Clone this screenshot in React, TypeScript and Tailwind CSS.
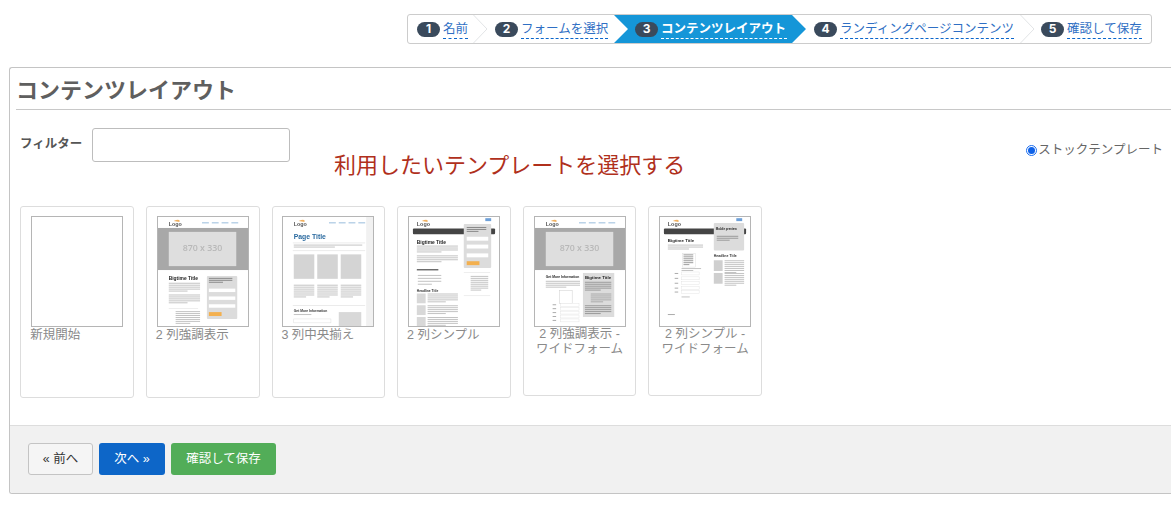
import React from "react";

const FONT = "font-['Liberation_Sans','Noto_Sans_CJK_JP',sans-serif]";

function Chevron() {
  return (
    <svg width="15" height="28" viewBox="0 0 15 28" className="shrink-0">
      <path d="M0.5 0 L14 14 L0.5 28" fill="none" stroke="#e2e4e6" strokeWidth="1" />
    </svg>
  );
}

function Stepper() {
  return (
    <div className="ml-[407px] flex h-[30px] w-[745px] items-center rounded-[3px] border border-[#cccccc] bg-white">
      <Step n={1} label="名前" className="pl-[9px] pr-[5px]" textWidth="w-[25px]" />
      <Chevron />
      <Step n={2} label="フォームを選択" className="pl-[7px] pr-[6px]" textWidth="w-[87px]" />
      <div className="flex h-[28px] w-[192px] shrink-0 items-center pl-[21px] bg-[#1596d8] [clip-path:polygon(0_0,178px_0,192px_50%,178px_100%,0_100%,14px_50%)]">
        <Badge n={3} />
        <span className="ml-[3px] mt-[1px] w-[126px] whitespace-nowrap border-b border-dashed border-white text-[12.5px] leading-[17px] font-bold text-white">
          コンテンツレイアウト
        </span>
      </div>
      <Step n={4} label="ランディングページコンテンツ" className="pl-[8px] pr-[6px]" textWidth="w-[174px]" />
      <Chevron />
      <Step n={5} label="確認して保存" className="pl-[6px]" textWidth="w-[75px]" />
    </div>
  );
}

function Badge({ n }: { n: number }) {
  return (
    <span className="flex h-[15px] w-[23px] shrink-0 items-center justify-center rounded-full bg-[#3a4a5c] text-[12px] font-bold text-white font-['Inter',sans-serif]">
      {n}
    </span>
  );
}

function Step({ n, label, className, textWidth }: { n: number; label: string; className: string; textWidth: string }) {
  return (
    <div className={`flex shrink-0 items-center ${className}`}>
      <Badge n={n} />
      <span className={`ml-[3px] mt-[1px] ${textWidth} whitespace-nowrap border-b border-dashed border-[#0b66cc] text-[12.5px] leading-[17px] text-[#2f6fc4]`}>
        {label}
      </span>
    </div>
  );
}

function Lines({ x, y, w, n, gap = 2, color = "#c2c2c2" }: { x: number; y: number; w: number; n: number; gap?: number; color?: string }) {
  return (
    <>
      {Array.from({ length: n }, (_, i) => (
        <rect key={i} x={x} y={y + i * gap} width={i === n - 1 ? w * 0.6 : w} height={1} fill={color} />
      ))}
    </>
  );
}

function Logo({ x = 11, y = 3 }: { x?: number; y?: number }) {
  return (
    <g>
      <path d={`M${x + 5} ${y + 1} Q${x + 9} ${y - 1} ${x + 11} ${y} L${x + 11} ${y + 2} Z`} fill="#f0b060" />
      <text x={x} y={y + 6} fontSize="5.5" fontWeight="700" fill="#555" fontFamily="Liberation Sans">
        Logo
      </text>
    </g>
  );
}

function NavLinks({ x = 45, y = 5 }: { x?: number; y?: number }) {
  return (
    <g>
      {[0, 10, 20, 30].map((d) => (
        <rect key={d} x={x + d} y={y} width={7} height={1.4} fill="#b4cfe6" />
      ))}
    </g>
  );
}

function Thumb({ children }: { children?: React.ReactNode }) {
  return (
    <div className="h-[111px] w-[92px] shrink-0 overflow-hidden border border-[#b5b5b5] bg-white">
      <svg width="90" height="109" viewBox="0 0 92 111" className="block blur-[0.6px]">
        {children}
      </svg>
    </div>
  );
}

function Hero() {
  return (
    <g>
      <rect x="-2" y="11" width="96" height="43" fill="#a8a8a8" />
      <rect x="11" y="15" width="69" height="35" fill="#dedede" />
      <text x="45.5" y="35" textAnchor="middle" fontSize="9" fontWeight="600" fill="#b8b8b8" fontFamily="Open Sans">
        870 x 330
      </text>
    </g>
  );
}

function TwoColHighlight() {
  return (
    <Thumb>
      <Logo />
      <NavLinks />
      <Hero />
      <text x="11" y="64" fontSize="5" fontWeight="700" fill="#222" fontFamily="Liberation Sans">Bigtime Title</text>
      <Lines x={11} y={67} w={32} n={5} />
      <Lines x={11} y={79} w={32} n={5} />
      <rect x="11" y="93" width="30" height="0.6" fill="#e2e2e2" />
      <Lines x={18} y={96} w={25} n={7} />
      <rect x="50" y="60" width="31" height="44" rx="1" fill="#dcdcdc" />
      <Lines x={52} y={62} w={24} n={3} color="#888" />
      <rect x="52" y="73" width="27" height="3.5" fill="#fff" />
      <rect x="52" y="81" width="27" height="3.5" fill="#fff" />
      <rect x="52" y="89" width="27" height="3.5" fill="#fff" />
      <rect x="52" y="97" width="13" height="4" fill="#f3b04f" />
    </Thumb>
  );
}

function ThreeColCenter() {
  return (
    <Thumb>
      <rect x="85" y="-2" width="9" height="115" fill="#f1f1f1" />
      <Logo />
      <NavLinks x={47} />
      <text x="11" y="22" fontSize="7" fontWeight="700" fill="#2b6a9f" fontFamily="Liberation Sans">Page Title</text>
      <rect x="10" y="26" width="74" height="0.6" fill="#ddd" />
      <Lines x={11} y={28} w={70} n={2} />
      <rect x="10" y="34" width="74" height="0.6" fill="#ddd" />
      {[11, 35, 59].map((x) => (
        <g key={x}>
          <rect x={x} y="38" width="21" height="25" fill="#d4d4d4" />
          <Lines x={x} y={69} w={21} n={7} />
        </g>
      ))}
      <rect x="10" y="90" width="74" height="0.6" fill="#ddd" />
      <text x="11" y="97" fontSize="3.4" fontWeight="700" fill="#333" fontFamily="Liberation Sans">Get More Information</text>
      <Lines x={11} y={99} w={30} n={1} />
      <rect x="11" y="104" width="38" height="4" fill="#fff" stroke="#ddd" strokeWidth="0.5" />
      <rect x="57" y="97" width="23" height="16" fill="#d8d8d8" />
    </Thumb>
  );
}

function DarkNav() {
  return <rect x="4" y="11.5" width="84" height="6" rx="1" fill="#444" />;
}

function TwoColSimple() {
  return (
    <Thumb>
      <Logo x={8} />
      <rect x="78" y="1" width="6" height="3" fill="#6ea0d8" />
      <DarkNav />
      <rect x="56" y="7" width="28" height="45" rx="1" fill="#dcdcdc" />
      <Lines x={59} y={10} w={20} n={3} color="#888" />
      <rect x="59" y="20" width="22" height="4" fill="#fff" />
      <rect x="59" y="28" width="22" height="4" fill="#fff" />
      <rect x="59" y="37" width="22" height="4" fill="#fff" />
      <rect x="59" y="45" width="13" height="4" fill="#f3b04f" />
      <text x="8" y="27" fontSize="5" fontWeight="700" fill="#222" fontFamily="Liberation Sans">Bigtime Title</text>
      <Lines x={8} y={29} w={42} n={4} />
      <Lines x={8} y={39} w={42} n={4} />
      <rect x="8" y="53" width="22" height="1.4" fill="#666" />
      <Lines x={9} y={59} w={24} n={4} gap={3} />
      <text x="8" y="76" fontSize="3.4" fontWeight="700" fill="#333" fontFamily="Liberation Sans">Headline Title</text>
      {[78, 90, 102].map((y) => (
        <g key={y}>
          <rect x="8" y={y} width="9" height="10" fill="#d8d8d8" />
          <Lines x={19} y={y} w={31} n={5} />
        </g>
      ))}
      <rect x="56" y="56" width="27" height="0.6" fill="#e2e2e2" />
      <Lines x={63} y={60} w={18} n={8} />
      <rect x="56" y="80" width="27" height="0.6" fill="#e2e2e2" />
    </Thumb>
  );
}

function TwoColWide() {
  return (
    <Thumb>
      <Logo />
      <NavLinks />
      <Hero />
      <text x="11" y="62" fontSize="3.4" fontWeight="700" fill="#222" fontFamily="Liberation Sans">Get More Information</text>
      <Lines x={11} y={65} w={35} n={4} />
      <rect x="25" y="75" width="13" height="13" fill="#fff" stroke="#ccc" strokeWidth="0.5" />
      {[89, 93, 97, 101, 105].map((y) => (
        <g key={y}>
          <Lines x={18} y={y} w={6} n={1} color="#aaa" />
          <rect x="26" y={y - 1} width="19" height="3" fill="#fff" stroke="#ddd" strokeWidth="0.4" />
        </g>
      ))}
      <rect x="49" y="57" width="32" height="45" fill="#dcdcdc" />
      <text x="51" y="63" fontSize="4.5" fontWeight="700" fill="#222" fontFamily="Liberation Sans">Bigtime Title</text>
      <Lines x={51} y={66} w={27} n={5} color="#999" />
      <Lines x={57} y={78} w={21} n={5} color="#aaa" />
      <Lines x={51} y={90} w={27} n={5} color="#999" />
    </Thumb>
  );
}

function TwoColSimpleWide() {
  return (
    <Thumb>
      <Logo x={8} />
      <rect x="78" y="1" width="6" height="3" fill="#6ea0d8" />
      <DarkNav />
      <rect x="55" y="6" width="31" height="28" rx="1" fill="#dcdcdc" />
      <text x="57" y="13" fontSize="3" fontWeight="700" fill="#222" fontFamily="Liberation Sans">Mobile preview</text>
      <Lines x={58} y={19} w={22} n={3} gap={2} color="#999" />
      <text x="8" y="25" fontSize="4.5" fontWeight="700" fill="#222" fontFamily="Liberation Sans">Bigtime Title</text>
      <Lines x={8} y={28} w={36} n={3} />
      <rect x="23" y="37" width="13" height="14" fill="#fff" stroke="#ddd" strokeWidth="0.5" />
      <Lines x={24} y={38} w={10} n={6} color="#999" />
      <Lines x={22} y={52} w={20} n={2} />
      {[57, 62, 67, 72, 76].map((y) => (
        <g key={y}>
          <Lines x={15} y={y} w={6} n={1} color="#aaa" />
          <rect x="22" y={y - 1} width="18" height="3" fill="#fff" stroke="#ddd" strokeWidth="0.4" />
        </g>
      ))}
      <Lines x={22} y={81} w={14} n={1} />
      <Lines x={8} y={99} w={12} n={1} color="#aaa" />
      <text x="55" y="41" fontSize="3.6" fontWeight="700" fill="#333" fontFamily="Liberation Sans">Headline Title</text>
      {[44, 57].map((y) => (
        <g key={y}>
          <rect x="55" y={y} width="9" height="11" fill="#cfcfcf" />
          <Lines x={66} y={y} w={20} n={7} />
        </g>
      ))}
    </Thumb>
  );
}

const templates: { title: React.ReactNode; thumb: React.ReactNode; center?: boolean; tall: boolean }[] = [
  { title: "新規開始", thumb: <Thumb />, tall: true },
  { title: "2 列強調表示", thumb: <TwoColHighlight />, tall: true },
  { title: "3 列中央揃え", thumb: <ThreeColCenter />, tall: true },
  { title: "2 列シンプル", thumb: <TwoColSimple />, tall: true },
  { title: <>2 列強調表示 -<br />ワイドフォーム</>, thumb: <TwoColWide />, center: true, tall: false },
  { title: <>2 列シンプル -<br />ワイドフォーム</>, thumb: <TwoColSimpleWide />, center: true, tall: false },
];

function TemplateCard({ title, thumb, center, tall }: { title: React.ReactNode; thumb: React.ReactNode; center?: boolean; tall: boolean }) {
  return (
    <div className={`flex w-[113.6px] shrink-0 flex-col rounded-[3px] border border-[#dddddd] px-[9.8px] pt-[9px] ${tall ? "h-[192px]" : "h-[190px]"}`}>
      {thumb}
      <div className={`-ml-[1px] text-[12.5px] leading-[15px] text-[#8a8a8a] ${center ? "-mr-[1px] text-center" : "-mr-[6px] mt-[1px]"}`}>
        {title}
      </div>
    </div>
  );
}

export default function App() {
  return (
    <div className={`h-[512px] w-[1171px] overflow-hidden bg-white pt-[14px] ${FONT}`}>
      <Stepper />
      <div className="ml-[9px] mt-[23px] h-[427px] overflow-hidden rounded-l-[3px] border-y border-l border-[#c4c4c4] bg-white">
        <div className="pl-[6px]">
          <h1 className="flex h-[42px] items-center border-b border-[#c8c8c8] pt-[4px] text-[22px] font-bold text-[#5f5f5f]">
            コンテンツレイアウト
          </h1>
        </div>
        <div className="flex h-[96px] pl-[10px] pr-[8px] pt-[18px]">
          <label className="w-[72px] pt-[8px] text-[12.5px] leading-[16px] font-bold text-[#555555]">フィルター</label>
          <input className="h-[34px] w-[198px] rounded-[3px] border border-[#bdbdbd] bg-white" />
          <div className="ml-[44px] mt-[22px] whitespace-nowrap text-[22px] leading-[32px] text-[#b0301c]">利用したいテンプレートを選択する</div>
          <label className="ml-auto mt-[13px] flex h-[18px] items-center text-[12.5px] text-[#666666]">
            <span className="mr-[1px] flex h-[11px] w-[11px] items-center justify-center rounded-full border border-[#1a6df0] bg-white">
              <span className="h-[7px] w-[7px] rounded-full bg-[#0f62e8]" />
            </span>
            ストックテンプレート
          </label>
        </div>
        <div className="flex h-[219px] items-start gap-[12px] pl-[10.4px]">
          {templates.map((t, i) => (
            <TemplateCard key={i} {...t} />
          ))}
        </div>
        <div className="flex h-[68px] gap-[6px] border-t border-[#dddddd] bg-[#f1f1f1] pl-[18px] pt-[17px]">
          <button className="h-[32px] w-[65px] rounded-[3px] border border-[#c4c4c4] bg-[#f5f5f5] text-[12.5px] text-[#333333]">« 前へ</button>
          <button className="h-[32px] w-[66px] rounded-[3px] bg-[#0d66c8] text-[12.5px] text-white">次へ »</button>
          <button className="h-[32px] w-[105px] rounded-[3px] bg-[#52ad58] text-[12.5px] text-white">確認して保存</button>
        </div>
      </div>
    </div>
  );
}
